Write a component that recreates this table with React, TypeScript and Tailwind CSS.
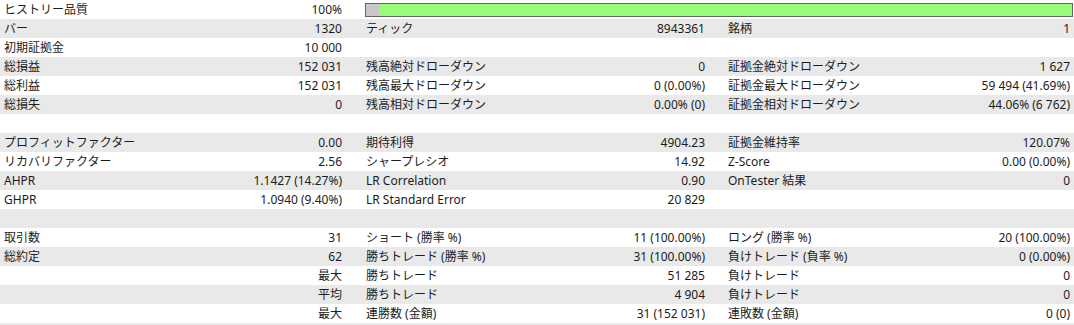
type Cell = [string, string];
type Row = { a?: Cell; b?: Cell; c?: Cell; bar?: boolean };

const rows: Row[] = [
  { a: ['ヒストリー品質', '100%'], bar: true },
  { a: ['バー', '1320'], b: ['ティック', '8943361'], c: ['銘柄', '1'] },
  { a: ['初期証拠金', '10 000'] },
  { a: ['総損益', '152 031'], b: ['残高絶対ドローダウン', '0'], c: ['証拠金絶対ドローダウン', '1 627'] },
  { a: ['総利益', '152 031'], b: ['残高最大ドローダウン', '0 (0.00%)'], c: ['証拠金最大ドローダウン', '59 494 (41.69%)'] },
  { a: ['総損失', '0'], b: ['残高相対ドローダウン', '0.00% (0)'], c: ['証拠金相対ドローダウン', '44.06% (6 762)'] },
  {},
  { a: ['プロフィットファクター', '0.00'], b: ['期待利得', '4904.23'], c: ['証拠金維持率', '120.07%'] },
  { a: ['リカバリファクター', '2.56'], b: ['シャープレシオ', '14.92'], c: ['Z-Score', '0.00 (0.00%)'] },
  { a: ['AHPR', '1.1427 (14.27%)'], b: ['LR Correlation', '0.90'], c: ['OnTester 結果', '0'] },
  { a: ['GHPR', '1.0940 (9.40%)'], b: ['LR Standard Error', '20 829'] },
  {},
  { a: ['取引数', '31'], b: ['ショート (勝率 %)', '11 (100.00%)'], c: ['ロング (勝率 %)', '20 (100.00%)'] },
  { a: ['総約定', '62'], b: ['勝ちトレード (勝率 %)', '31 (100.00%)'], c: ['負けトレード (負率 %)', '0 (0.00%)'] },
  { a: ['', '最大'], b: ['勝ちトレード', '51 285'], c: ['負けトレード', '0'] },
  { a: ['', '平均'], b: ['勝ちトレード', '4 904'], c: ['負けトレード', '0'] },
  { a: ['', '最大'], b: ['連勝数 (金額)', '31 (152 031)'], c: ['連敗数 (金額)', '0 (0)'] },
];

function Pair({ cell, className }: { cell?: Cell; className: string }) {
  return (
    <div className={`flex items-center justify-between whitespace-nowrap ${className}`}>
      <span>{cell?.[0]}</span>
      <span>{cell?.[1]}</span>
    </div>
  );
}

export default function App() {
  return (
    <div
      className="w-[1074px] h-[325px] bg-[#e9e9e9] text-[12px] leading-[19px] text-[#1c1c1c] overflow-hidden"
      style={{ fontFamily: '"Noto Sans", "Noto Sans CJK JP", sans-serif' }}
    >
      {rows.map((r, i) => (
        <div
          key={i}
          className={`grid grid-cols-[346px_16px_347px_15px_350px] h-[19px] ${i % 2 === 0 ? 'bg-white' : 'bg-[#e9e9e9]'}`}
        >
          <Pair cell={r.a} className="pl-1 pr-1" />
          <div />
          {r.bar ? (
            <div className="col-span-3 flex items-center pl-[3px] pr-[1px]">
              <div className="flex h-[14px] w-full border border-[#646464]">
                <div className="w-[13px] bg-[#c8c8c8]" />
                <div className="flex-1 bg-[#98fb7c]" />
              </div>
            </div>
          ) : (
            <>
              <Pair cell={r.b} className="pl-1 pr-1" />
              <div />
              <Pair cell={r.c} className="pl-1 pr-1" />
            </>
          )}
        </div>
      ))}
    </div>
  );
}
